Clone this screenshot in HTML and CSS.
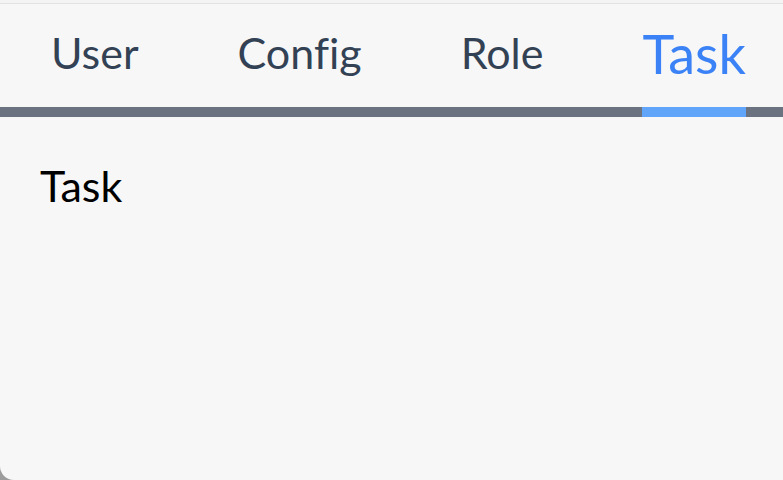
FILE: index.html
```html
<!DOCTYPE html>
<html>
<head>
<meta charset="utf-8">
<link rel="stylesheet" href="styles.css">
</head>
<body>
<div class="window">
  <div class="tabs">
    <div class="tab">User</div>
    <div class="tab">Config</div>
    <div class="tab">Role</div>
    <div class="tab active">Task</div>
  </div>
  <div class="panel">Task</div>
</div>
</body>
</html>
```

FILE: styles.css
```css
html, body {
  margin: 0;
  padding: 0;
  background: #9c9c9c;
  overflow: hidden;
}
body {
  width: 783px;
  height: 480px;
  font-family: Lato, "Noto Sans", sans-serif;
  font-variant-ligatures: none;
}
.window {
  box-sizing: border-box;
  height: 480px;
  background: #f7f7f7;
  border-top: 3px solid #f4f4f4;
  border-bottom-left-radius: 14px;
  overflow: hidden;
}
.tabs {
  box-sizing: border-box;
  height: 114px;
  display: flex;
  gap: 99px;
  padding-left: 51px;
  border-top: 1px solid #e2e2e2;
  border-bottom: 10px solid #6b7280;
}
.tab {
  display: flex;
  align-items: center;
  font-size: 43px;
  color: #334155;
  border-bottom: 10px solid transparent;
  margin-bottom: -10px;
  padding-bottom: 7px;
  line-height: 1;
}
.tab.active {
  font-size: 54px;
  color: #3b82f6;
  border-bottom-color: #60a5fa;
  padding-bottom: 3px;
}
.panel {
  padding: 47px 0 0 40px;
  font-size: 43px;
  line-height: 1;
  color: #000;
}
```
